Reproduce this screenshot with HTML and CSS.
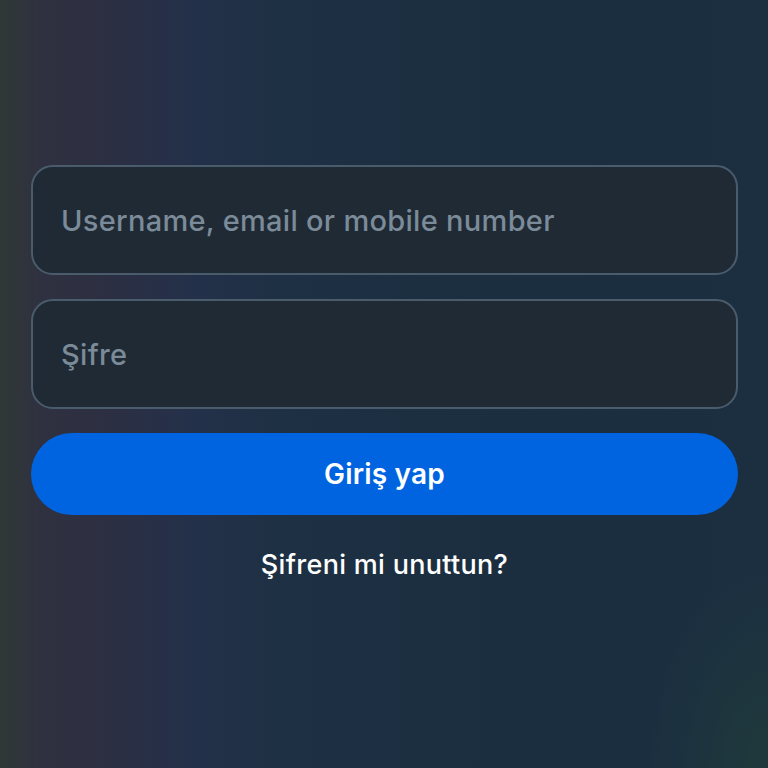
FILE: index.html
```html
<!DOCTYPE html>
<html lang="tr">
<head>
<meta charset="utf-8">
<title>Giriş</title>
<link rel="stylesheet" href="styles.css">
</head>
<body>
<main class="screen">
  <form class="login">
    <div class="field"><span class="placeholder">Username, email or mobile number</span></div>
    <div class="field"><span class="placeholder">Şifre</span></div>
    <button type="button" class="btn">Giriş yap</button>
    <a class="forgot" href="#">Şifreni mi unuttun?</a>
  </form>
</main>
</body>
</html>
```
FILE: styles.css
```css
* { box-sizing: border-box; }
html, body { margin: 0; padding: 0; }
body {
  width: 768px;
  height: 768px;
  overflow: hidden;
  font-family: Inter, "Noto Sans", sans-serif;
}
.screen {
  width: 768px;
  height: 768px;
  background:
    radial-gradient(ellipse 120px 200px at 768px 768px, rgba(32,62,56,0.7), rgba(32,62,56,0) 100%),
    linear-gradient(90deg, #303836 0px, #2f3140 40px, #2c2f42 110px, #24304a 190px, #1e3043 280px, #1c2f41 420px, #1b2e40 600px, #1c2f41 768px);
  padding: 165px 30px 0 31px;
}
.login {
  display: flex;
  flex-direction: column;
  align-items: stretch;
}
.field {
  height: 110px;
  border: 2px solid #4a5c6c;
  border-radius: 22px;
  background: #1f2a34;
  display: flex;
  align-items: center;
  padding-left: 28px;
  margin-bottom: 24px;
}
.placeholder {
  color: #7b8b99;
  font-size: 29px;
  font-weight: 500;
  letter-spacing: 0.3px;
}
.btn {
  height: 82px;
  border: none;
  border-radius: 41px;
  background: #0064e0;
  color: #ffffff;
  font-family: inherit;
  font-size: 28px;
  font-weight: 600;
  letter-spacing: 0.2px;
}
.forgot {
  align-self: center;
  margin-top: 33px;
  color: #ffffff;
  font-size: 27px;
  font-weight: 500;
  letter-spacing: 0.3px;
  text-decoration: none;
}
```
